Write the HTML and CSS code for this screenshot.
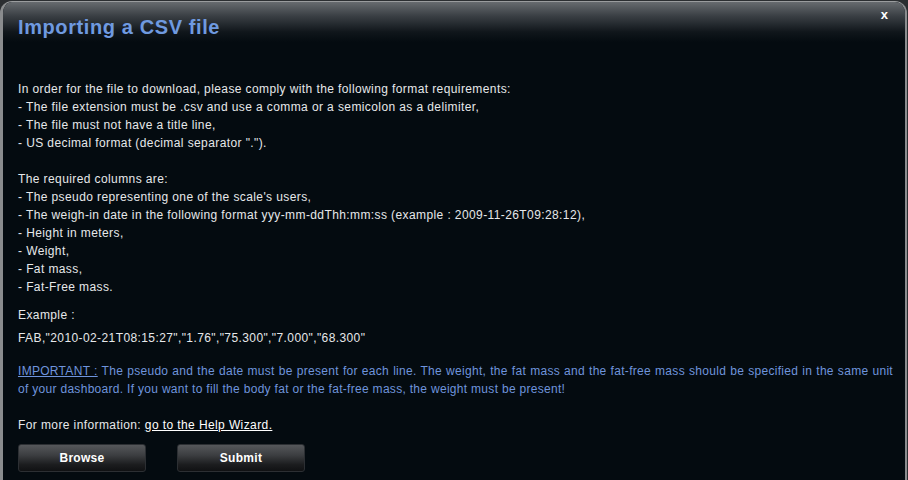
FILE: index.html
```html
<!DOCTYPE html>
<html>
<head>
<meta charset="utf-8">
<link rel="stylesheet" href="styles.css">
</head>
<body>
<div class="dialog">
  <div class="header">
    <h1 class="title">Importing a CSV file</h1>
    <span class="close">x</span>
  </div>
  <div class="content">
    <p class="block1">In order for the file to download, please comply with the following format requirements:<br>
    - The file extension must be .csv and use a comma or a semicolon as a delimiter,<br>
    - The file must not have a title line,<br>
    - US decimal format (decimal separator ".").</p>
    <p class="block2">The required columns are:<br>
    - The pseudo representing one of the scale's users,<br>
    - The weigh-in date in the following format yyy-mm-ddThh:mm:ss (example : 2009-11-26T09:28:12),<br>
    - Height in meters,<br>
    - Weight,<br>
    - Fat mass,<br>
    - Fat-Free mass.</p>
    <p class="example">Example :</p>
    <p class="sample">FAB,"2010-02-21T08:15:27","1.76","75.300","7.000","68.300"</p>
    <p class="important"><a class="imp-link">IMPORTANT :</a> The pseudo and the date must be present for each line. The weight, the fat mass and the fat-free mass should be specified in the same unit of your dashboard. If you want to fill the body fat or the fat-free mass, the weight must be present!</p>
    <p class="more">For more information: <a class="help">go to the Help Wizard.</a></p>
    <div class="buttons">
      <button class="btn">Browse</button>
      <button class="btn">Submit</button>
    </div>
  </div>
</div>
</body>
</html>
```
FILE: styles.css
```css
html, body {
  margin: 0;
  padding: 0;
  background: #2b2e31;
  height: 100%;
  overflow: hidden;
}
.dialog {
  width: 902px;
  height: 490px;
  margin-top: 1px;
  border-left: 3px solid #8a8c8e;
  border-top: 1px solid #9a9c9e;
  border-right: 2px solid #8a8c8e;
  border-radius: 12px 12px 0 0;
  background: #040b10;
  overflow: hidden;
  font-family: "Liberation Sans", Arial, sans-serif;
  color: #e6e8ea;
}
.header {
  height: 40px;
  background: linear-gradient(to bottom, #676b6f 0%, #3a3f44 35%, #10161b 75%, #040b10 100%);
  display: flex;
  justify-content: space-between;
  align-items: flex-start;
  padding: 0 17px 0 15px;
}
.title {
  margin: 12px 0 0 0;
  font-size: 20px;
  font-weight: bold;
  letter-spacing: 0.6px;
  color: #6f9ae0;
  line-height: 26px;
}
.close {
  margin-top: 5px;
  font-size: 13px;
  font-weight: bold;
  color: #ffffff;
}
.content {
  padding: 38px 12px 0 15px;
  font-size: 12px;
  line-height: 18px;
  letter-spacing: 0.4px;
}
.content p {
  margin: 0;
}
.content .block1 {
  margin-bottom: 18px;
}
.content .example {
  margin-top: 10px;
}
.content .sample {
  margin-top: 5px;
}
.content .important {
  margin-top: 15px;
  color: #6f94dc;
  text-align: justify;
  letter-spacing: 0.3px;
}
.imp-link {
  text-decoration: underline;
}
.content .more {
  margin-top: 18px;
}
.help {
  text-decoration: underline;
  color: #ffffff;
}
.buttons {
  display: flex;
  gap: 31px;
  margin-top: 10px;
}
.btn {
  width: 128px;
  height: 28px;
  border: 1px solid #2c2f33;
  border-radius: 3px;
  background: linear-gradient(to bottom, #55575a 0%, #3b3d40 40%, #1c1d1f 75%, #101113 100%);
  color: #ffffff;
  font-family: "Liberation Sans", Arial, sans-serif;
  font-size: 12px;
  font-weight: bold;
  letter-spacing: 0.3px;
  padding: 0;
}
```
